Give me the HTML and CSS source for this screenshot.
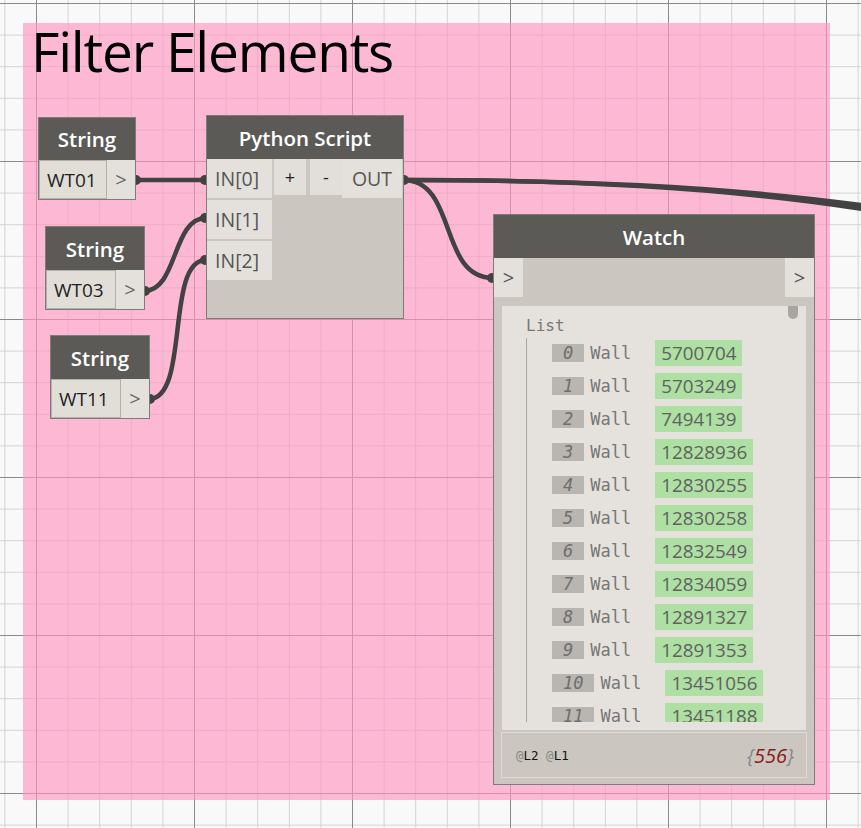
FILE: index.html
```html
<!DOCTYPE html>
<html>
<head>
<meta charset="utf-8">
<link rel="stylesheet" href="styles.css">
</head>
<body>
<div class="canvas">
  <svg class="grid" width="861" height="828" viewBox="0 0 861 828">
    <defs>
      <pattern id="minor" x="4.4" y="3" width="31.6" height="31.6" patternUnits="userSpaceOnUse">
        <path d="M0 0.5H31.6M0.5 0V31.6" stroke="#d3d3d3" stroke-width="1" fill="none"/>
      </pattern>
      <pattern id="major" x="36" y="3" width="158" height="158" patternUnits="userSpaceOnUse">
        <path d="M0 0.5H158M0.5 0V158" stroke="#8a8a8a" stroke-width="1" fill="none"/>
      </pattern>
    </defs>
    <rect width="861" height="828" fill="#f9f9f9"/>
    <rect width="861" height="828" fill="url(#minor)"/>
    <rect width="861" height="828" fill="url(#major)"/>
  </svg>

  <div class="group">
    <div class="group-title">Filter Elements</div>
  </div>

  <svg class="wires" width="861" height="828" viewBox="0 0 861 828">
    <g stroke="#424242" stroke-width="4.5" fill="none" stroke-linecap="round">
      <path d="M135 180 L206 180"/>
      <path d="M144 291 C178 291 172 218 206 218"/>
      <path d="M149 399 C190 399 165 260 206 260"/>
      <path d="M403 180 C458 180 438 278 493 278"/>
      <path d="M403 180 C560 180 720 185 875 207"/>
      <path d="M403 180 C560 180 720 186 875 211"/>
    </g>
    <g fill="#424242">
      <circle cx="136" cy="180" r="5"/>
      <circle cx="205" cy="180" r="5"/>
      <circle cx="145" cy="291" r="5"/>
      <circle cx="205" cy="218" r="5"/>
      <circle cx="150" cy="399" r="5"/>
      <circle cx="205" cy="260" r="5"/>
      <circle cx="404" cy="180" r="5"/>
      <circle cx="492" cy="278" r="5"/>
    </g>
  </svg>

  <div class="node string s1">
    <div class="header">String</div>
    <div class="sbody"><div class="sinput">WT01</div><div class="sport">&gt;</div></div>
  </div>
  <div class="node string s2">
    <div class="header">String</div>
    <div class="sbody"><div class="sinput">WT03</div><div class="sport">&gt;</div></div>
  </div>
  <div class="node string s3">
    <div class="header">String</div>
    <div class="sbody"><div class="sinput">WT11</div><div class="sport">&gt;</div></div>
  </div>

  <div class="node python">
    <div class="header">Python Script</div>
    <div class="pbody">
      <div class="pins">
        <div class="pin">IN[0]</div>
        <div class="pin">IN[1]</div>
        <div class="pin">IN[2]</div>
      </div>
      <div class="pbtn">+</div>
      <div class="pbtn minus">-</div>
      <div class="pout">OUT</div>
    </div>
  </div>

  <div class="node watch">
    <div class="header">Watch</div>
    <div class="wports"><div class="wport">&gt;</div><div class="wport">&gt;</div></div>
    <div class="panel">
      <div class="thumb"></div>
      <div class="list-label">List</div>
      <div class="tree">
        <div class="row"><span class="idx">0</span><span class="wall">Wall</span><span class="val">5700704</span></div>
        <div class="row"><span class="idx">1</span><span class="wall">Wall</span><span class="val">5703249</span></div>
        <div class="row"><span class="idx">2</span><span class="wall">Wall</span><span class="val">7494139</span></div>
        <div class="row"><span class="idx">3</span><span class="wall">Wall</span><span class="val">12828936</span></div>
        <div class="row"><span class="idx">4</span><span class="wall">Wall</span><span class="val">12830255</span></div>
        <div class="row"><span class="idx">5</span><span class="wall">Wall</span><span class="val">12830258</span></div>
        <div class="row"><span class="idx">6</span><span class="wall">Wall</span><span class="val">12832549</span></div>
        <div class="row"><span class="idx">7</span><span class="wall">Wall</span><span class="val">12834059</span></div>
        <div class="row"><span class="idx">8</span><span class="wall">Wall</span><span class="val">12891327</span></div>
        <div class="row"><span class="idx">9</span><span class="wall">Wall</span><span class="val">12891353</span></div>
        <div class="row"><span class="idx">10</span><span class="wall">Wall</span><span class="val">13451056</span></div>
        <div class="row"><span class="idx">11</span><span class="wall">Wall</span><span class="val">13451188</span></div>
      </div>
    </div>
    <div class="footer">
      <div class="levels"><span class="at">@</span>L2 <span class="at">@</span>L1</div>
      <div class="count"><span class="br">{</span>556<span class="br">}</span></div>
    </div>
  </div>
</div>
</body>
</html>
```

FILE: styles.css
```css
* { box-sizing: border-box; }
html, body { margin: 0; padding: 0; }
body { width: 861px; height: 828px; overflow: hidden; background: #f9f9f9; font-family: "Open Sans", "Noto Sans", sans-serif; }

.canvas { position: relative; width: 861px; height: 828px; overflow: hidden; }
.grid, .wires { position: absolute; left: 0; top: 0; }

.group {
  position: absolute; left: 23px; top: 23px; width: 807px; height: 777px;
  background: rgba(255, 150, 190, 0.65);
  padding: 0 0 0 8px;
}
.group-title { font-size: 55px; line-height: 56px; color: #000; letter-spacing: -1.2px; }

.node { position: absolute; background: #cbc7c0; border: 1px solid #7e7c79; display: flex; flex-direction: column; }
.header {
  background: #5b5a57; color: #fff; font-weight: 600; font-size: 20.5px;
  height: 42px; display: flex; align-items: center; justify-content: center; flex: none;
}

.string .sbody { display: flex; flex: 1; }
.sinput { flex: 1; background: #e1ded8; border: 1px solid #b3b0ab; font-size: 19px; color: #222; display: flex; align-items: center; padding-left: 7px; }
.sport { width: 28px; flex: none; background: #e4e1dc; color: #666; font-size: 20px; display: flex; align-items: center; justify-content: center; }

.s1 { left: 38px; top: 117px; width: 98px; height: 83px; }
.s2 { left: 45px; top: 226px; width: 100px; height: 84px; }
.s3 { left: 50px; top: 335px; width: 100px; height: 84px; }
.s2 .header, .s3 .header { height: 43px; }

.python { left: 206px; top: 115px; width: 198px; height: 204px; }
.python .header { height: 43px; }
.pbody { display: flex; align-items: flex-start; flex: 1; }
.pins { display: flex; flex-direction: column; gap: 2px; width: 65px; }
.pin { height: 39px; background: #e4e1dc; color: #555; font-size: 19.5px; display: flex; align-items: center; padding-left: 8px; }
.pbtn { width: 32px; height: 36px; background: #e2dfda; margin-left: 2px; font-size: 18px; color: #222; display: flex; align-items: center; justify-content: center; }
.pbtn.minus { margin-left: 4px; }
.pout { width: 60px; height: 39px; background: #e4e1dc; color: #555; font-size: 19.5px; display: flex; align-items: center; justify-content: center; }

.watch { left: 493px; top: 214px; width: 322px; height: 571px; }
.watch .header { height: 43px; }
.wports { display: flex; justify-content: space-between; height: 39px; flex: none; }
.wport { width: 29px; background: #e4e1dc; color: #555; font-size: 20px; display: flex; align-items: center; justify-content: center; }

.panel { position: relative; margin: 9px 8px 0 8px; height: 424px; background: #e5e2dd; padding-bottom: 8px; flex: none; }
.thumb { position: absolute; right: 8px; top: 0; width: 10px; height: 13px; border-radius: 0 0 5px 5px; background: #a8a5a0; }
.list-label { font-family: "DejaVu Sans Mono", monospace; font-size: 16px; color: #777; padding: 10px 0 0 24px; height: 32px; line-height: 20px; }
.tree { margin-left: 24px; border-left: 1px solid #a8a6a2; height: 384px; overflow: hidden; padding-top: 2px; padding-left: 25px; }
.row { display: flex; align-items: center; height: 26px; margin-bottom: 7px; }
.idx { background: #b9b5b0; height: 18px; padding: 0 11px; font-family: "DejaVu Sans Mono", monospace; font-style: italic; font-size: 17px; line-height: 18px; color: #6e6e6e; }
.wall { margin-left: 6px; width: 65px; font-family: "DejaVu Sans Mono", monospace; font-size: 17px; color: #777; }
.val { background: #aedfa3; height: 26px; line-height: 26px; padding: 0 6px; font-size: 18.8px; color: #616161; }

.footer {
  margin: 2px 7px 0 7px; height: 46px; background: #cbc7c0; border: 1px solid #dedbd5;
  display: flex; align-items: center; justify-content: space-between; padding: 0 12px 0 14px; flex: none;
}
.levels { font-family: "DejaVu Sans Mono", monospace; font-size: 12.5px; color: #111; }
.at { color: #888; }
.count { font-style: italic; font-size: 20px; color: #8b1a1a; }
.br { color: #888; }
```
